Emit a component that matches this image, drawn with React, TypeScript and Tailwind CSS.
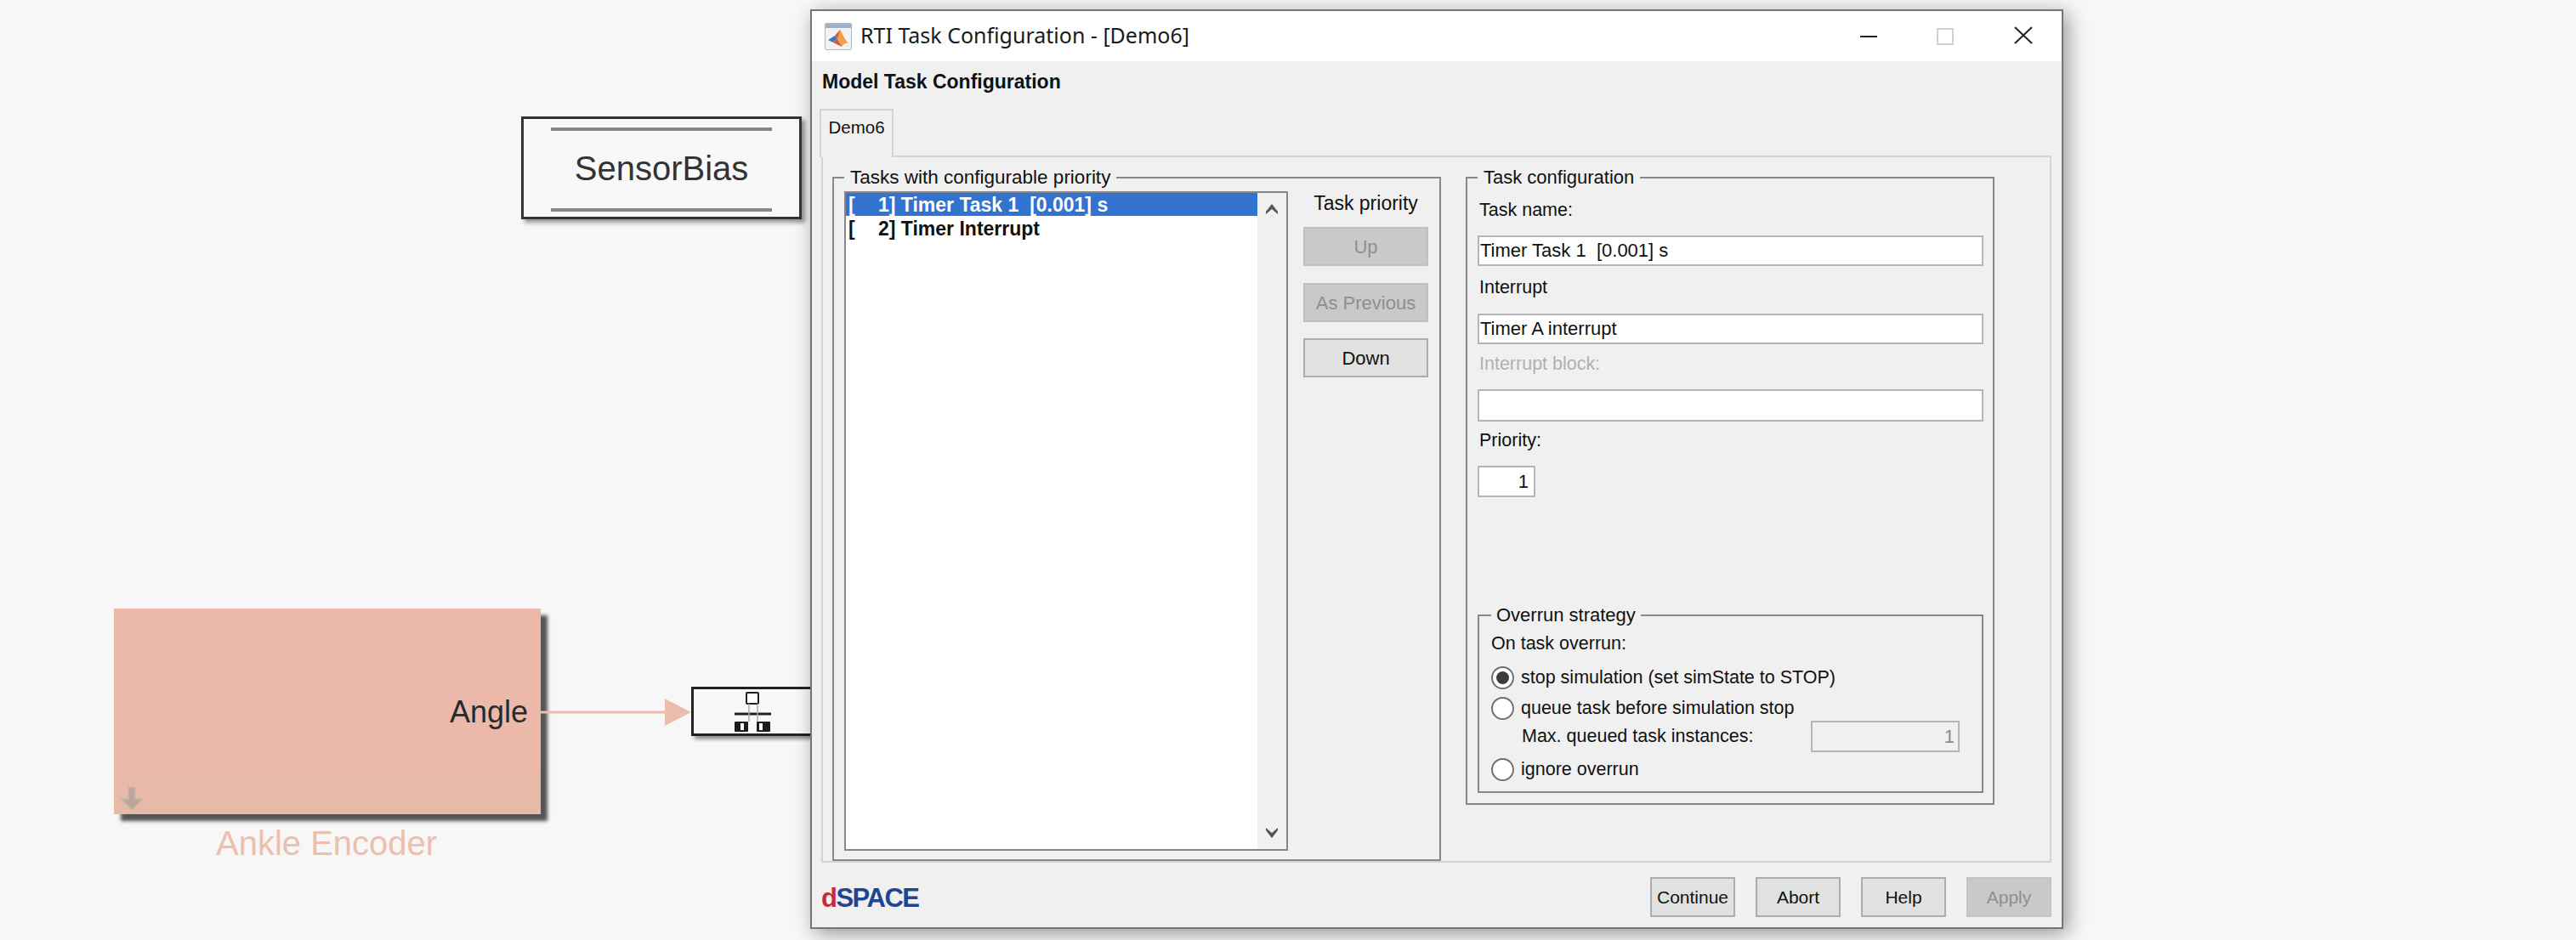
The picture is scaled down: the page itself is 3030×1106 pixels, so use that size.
const sans = "font-['Liberation_Sans',Arial,sans-serif]";

const inputCls = "border-2 border-[#b4b4bc] bg-white text-[22px] leading-none text-[#111] flex items-center px-[1px]";

function Label({ children, className = "" }: { children: React.ReactNode; className?: string }) {
  return (
    <div className={`flex h-[28px] items-center pl-[2px] text-[21.5px] text-[#111] ${className}`}>
      {children}
    </div>
  );
}

function Radio({ checked, label, className = "" }: { checked?: boolean; label: string; className?: string }) {
  return (
    <div className={`flex h-[30px] items-center ${className}`}>
      <span className="flex h-[27px] w-[27px] items-center justify-center rounded-full border-2 border-[#6e6e6e] bg-white">
        {checked && <span className="h-[15px] w-[15px] rounded-full bg-[#3c3c3c]" />}
      </span>
      <span className="ml-[8px] text-[21.5px] text-[#111]">{label}</span>
    </div>
  );
}

function SideButton({ label, disabled, className = "" }: { label: string; disabled?: boolean; className?: string }) {
  return (
    <div
      className={`flex h-[46px] w-[147px] items-center justify-center border-2 text-[22px] ${
        disabled
          ? "border-[#c0c0c0] bg-[#c9c9c9] text-[#8f8f8f]"
          : "border-[#adadad] bg-[#e1e1e1] text-[#111]"
      } ${className}`}
    >
      {label}
    </div>
  );
}

function FooterButton({ label, disabled }: { label: string; disabled?: boolean }) {
  return (
    <div
      className={`flex h-[47px] w-[100px] items-center justify-center border-2 text-[21px] ${
        disabled
          ? "border-[#c4c4c4] bg-[#c9c9c9] text-[#8f8f8f]"
          : "border-[#adadad] bg-[#e1e1e1] text-[#111]"
      }`}
    >
      {label}
    </div>
  );
}

function MatlabIcon() {
  return (
    <svg width="32" height="32" viewBox="0 0 32 32" className="shrink-0">
      <rect x="0.5" y="0.5" width="31" height="31" rx="1.5" fill="#f2f2f2" stroke="#b5b5b5" />
      <rect x="1" y="1" width="30" height="5" fill="#9db2c8" />
      <path d="M4 20 L12 15 L15 18 L10 23 Z" fill="#3f78c0" />
      <path d="M12 15 L18 8 L20 14 L15 18 Z" fill="#c9602f" />
      <path d="M18 8 C21 12 24 21 28 24 C24 23 22 25 20 28 C18 24 17 20 15 18 Z" fill="#eda04a" />
      <path d="M10 23 L15 18 L20 28 Z" fill="#c8622a" />
    </svg>
  );
}

function BusIcon() {
  return (
    <svg width="44" height="48" viewBox="0 0 44 48" className="shrink-0">
      <rect x="14" y="1" width="14" height="13" rx="1" fill="#fff" stroke="#222" strokeWidth="2" />
      <path d="M0 26 H43" stroke="#222" strokeWidth="3" />
      <path d="M17 14 V35 M27 14 V35" stroke="#aaa" strokeWidth="1.5" />
      <rect x="0" y="35" width="16" height="12" rx="1" fill="#1c1c1c" />
      <rect x="26" y="35" width="16" height="12" rx="1" fill="#1c1c1c" />
      <path d="M9 37 V45 M31 37 V45" stroke="#fff" strokeWidth="4" />
    </svg>
  );
}

export default function App() {
  return (
    <div className={`relative h-[1106px] w-[3030px] overflow-hidden bg-[#f7f7f7] ${sans}`}>
      {/* SensorBias block */}
      <div className="absolute left-[613px] top-[137px] flex h-[121px] w-[330px] flex-col items-center justify-between border-[3px] border-[#333] bg-[#f8f8f8] pb-[6px] pt-[10px] shadow-[4px_4px_5px_rgba(0,0,0,0.4)]">
        <div className="h-[4px] w-[260px] bg-[#888]" />
        <div className="mb-[4px] text-[40px] leading-none text-[#333]">SensorBias</div>
        <div className="h-[4px] w-[260px] bg-[#888]" />
      </div>

      {/* Ankle Encoder subsystem */}
      <div className="absolute left-[134px] top-[716px] flex h-[242px] w-[502px] flex-col bg-[#ebb8aa] shadow-[8px_8px_4px_#555]">
        <div className="flex h-[192px] items-end justify-end pb-[52px] pr-[15px] text-[36px] leading-none text-[#2a2a2a]">
          Angle
        </div>
        <div className="flex flex-1 items-end bg-[#e7baa7] pb-[4px] pl-[7px]">
          <svg width="28" height="29" viewBox="0 0 28 29">
            <path d="M10 1 H18 V15 H27 L14 28 L1 15 H10 Z" fill="#bba69b" stroke="#cdb8ab" strokeWidth="1.5" />
          </svg>
        </div>
      </div>
      <div className="absolute left-[254px] top-[970px] text-[40px] leading-[44px] text-[#ecbfae]">Ankle Encoder</div>

      {/* signal line */}
      <svg className="absolute left-[636px] top-[820px]" width="178" height="36" viewBox="0 0 178 36">
        <path d="M0 18 H148" stroke="#ecbcae" strokeWidth="3" />
        <path d="M146 2 L177 18 L146 34 Z" fill="#ecbcae" />
      </svg>

      {/* bus block */}
      <div className="absolute left-[813px] top-[808px] flex h-[58px] w-[160px] items-start border-[3px] border-[#222] bg-[#f8f8f8] pl-[48px] pt-[3px] shadow-[4px_4px_4px_rgba(0,0,0,0.4)]">
        <BusIcon />
      </div>

      {/* dialog window */}
      <div className="absolute left-[953px] top-[11px] flex h-[1082px] w-[1474px] flex-col border-2 border-[#757575] bg-[#f0f0f0] shadow-[5px_5px_22px_rgba(0,0,0,0.4)]">
        {/* title bar */}
        <div className="flex h-[59px] items-center bg-white pl-[15px]">
          <MatlabIcon />
          <span className="mb-[3px] ml-[10px] font-['Noto_Sans',sans-serif] text-[25px] leading-none text-[#1a1a1a]">
            RTI Task Configuration - [Demo6]
          </span>
          <div className="ml-auto flex h-full items-center">
            <div className="h-[2px] w-[20px] bg-[#222]" />
            <div className="ml-[70px] h-[20px] w-[20px] border-2 border-[#d0d0d0]" />
            <svg className="mb-[3px] ml-[71px] mr-[34px]" width="22" height="21" viewBox="0 0 22 21">
              <path d="M1 1 L21 20 M21 1 L1 20" stroke="#222" strokeWidth="2" fill="none" />
            </svg>
          </div>
        </div>

        {/* heading */}
        <div className="flex h-[56px] items-start pl-[12px] pt-[10px] text-[23px] font-bold leading-[28px] text-[#111]">
          Model Task Configuration
        </div>

        {/* tab */}
        <div className="relative z-10 -mb-[2px] ml-[9px] flex h-[57px] w-[87px] items-center justify-center border-2 border-b-0 border-[#d4d4d4] bg-[#f0f0f0] pb-[14px] text-[20.5px] text-[#111]">
          Demo6
        </div>

        {/* tab panel */}
        <div className="ml-[11px] flex h-[832px] w-[1447px] items-start border-2 border-[#d4d4d4] pl-[11px] pt-[12px]">
          <fieldset className="flex h-[816px] w-[716px] border-2 border-[#85898d] pl-[12px] pt-[4px]">
            <legend className="px-[7px] text-[22.5px] leading-[24px] text-[#111]">
              Tasks with configurable priority
            </legend>
            <div className="flex h-[776px] w-[522px] border-2 border-[#85898d] bg-white">
              <div className="flex-1 text-[23px] font-bold leading-[28px] text-[#111]">
                <div className="flex h-[27px] items-center bg-[#3373d0] pl-[3px] text-white">
                  <span className="w-[35px]">[</span>
                  <span className="whitespace-pre">1] Timer Task 1  [0.001] s</span>
                </div>
                <div className="flex h-[29px] items-center pl-[3px]">
                  <span className="w-[35px]">[</span>
                  <span>2] Timer Interrupt</span>
                </div>
              </div>
              <div className="flex w-[34px] flex-col items-center justify-between bg-[#f0f0f0] py-[12px]">
                <svg width="16" height="14" viewBox="0 0 16 14">
                  <path d="M8 1 L15 10 V13 L8 7 L1 13 V10 Z" fill="#555" />
                </svg>
                <svg width="16" height="14" viewBox="0 0 16 14">
                  <path d="M8 13 L15 4 V1 L8 7 L1 1 V4 Z" fill="#555" />
                </svg>
              </div>
            </div>
            <div className="ml-[18px] flex w-[147px] flex-col">
              <div className="flex h-[28px] items-center justify-center whitespace-nowrap text-[23px] text-[#111]">Task priority</div>
              <SideButton label="Up" disabled className="mt-[14px]" />
              <SideButton label="As Previous" disabled className="mt-[20px]" />
              <SideButton label="Down" className="mt-[19px]" />
            </div>
          </fieldset>

          <fieldset className="ml-[29px] h-[750px] w-[622px] border-2 border-[#85898d] pl-[12px]">
            <legend className="px-[7px] text-[22px] leading-[24px] text-[#111]">Task configuration</legend>
            <Label className="mt-[12px]">Task name:</Label>
            <div className={`${inputCls} mt-[16px] h-[36px] w-[595px] whitespace-pre`}>Timer Task 1  [0.001] s</div>
            <Label className="mt-[11px]">Interrupt</Label>
            <div className={`${inputCls} mt-[17px] h-[36px] w-[595px]`}>Timer A interrupt</div>
            <Label className="mt-[9px] text-[#b0b0b0]">Interrupt block:</Label>
            <div className={`${inputCls} mt-[16px] h-[38px] w-[595px]`} />
            <Label className="mt-[8px]">Priority:</Label>
            <div className={`${inputCls} mt-[16px] h-[37px] w-[68px] justify-end pr-[6px]`}>1</div>

            <fieldset className="mt-[127px] h-[221px] w-[595px] border-2 border-[#85898d] pl-[14px]">
              <legend className="px-[6px] text-[22px] leading-[24px] text-[#111]">Overrun strategy</legend>
              <div className="mt-[7px] flex h-[28px] items-center text-[21.5px] text-[#111]">On task overrun:</div>
              <Radio checked label="stop simulation (set simState to STOP)" className="mt-[11px]" />
              <Radio label="queue task before simulation stop" className="mt-[6px]" />
              <div className="flex h-[37px] items-center pl-[36px] pr-[26px]">
                <span className="text-[21.5px] text-[#111]">Max. queued task instances:</span>
                <div className="ml-auto flex h-[37px] w-[175px] items-center justify-end border-2 border-[#b4b4bc] pr-[4px] text-[22px] text-[#8a8a8a]">
                  1
                </div>
              </div>
              <Radio label="ignore overrun" className="mt-[5px]" />
            </fieldset>
          </fieldset>
        </div>

        {/* footer */}
        <div className="flex flex-1 items-start pl-[11px] pr-[12px] pt-[17px]">
          <div className="mt-[10px] text-[31px] font-bold leading-[30px] tracking-[-1.5px]">
            <span className="text-[#c8283c]">d</span>
            <span className="text-[#1f4690]">SPACE</span>
          </div>
          <div className="ml-auto flex gap-[24px]">
            <FooterButton label="Continue" />
            <FooterButton label="Abort" />
            <FooterButton label="Help" />
            <FooterButton label="Apply" disabled />
          </div>
        </div>
      </div>
    </div>
  );
}
